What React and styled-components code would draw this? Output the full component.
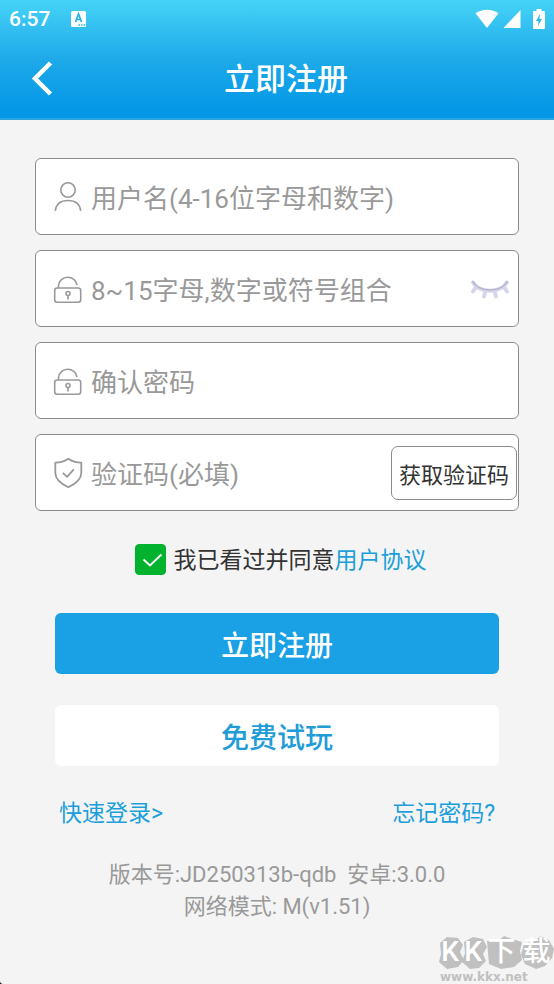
import React, { useState } from "react";
import styled, { createGlobalStyle } from "styled-components";

const GlobalStyle = createGlobalStyle`
  *, *::before, *::after { box-sizing: border-box; }
  body {
    margin: 0;
    background: #f4f4f4;
    color: #333;
    font-family: Roboto, "Noto Sans CJK SC", sans-serif;
  }
  button, input { font: inherit; }
`;

const Page = styled.div`
  position: relative;
  display: flex;
  flex-direction: column;
  min-height: 100vh;
`;

const Header = styled.header`
  color: #fff;
  background: linear-gradient(#46d3f7 0, #1eaae9 50%, #0498e6 92%, #0498e6 100%);
  border-bottom: 2px solid #2ba5e2;
`;

const StatusBar = styled.div`
  display: flex;
  align-items: center;
  justify-content: space-between;
  height: 38px;
  padding: 0 9px;
  font-size: 21px;
  font-weight: 500;
`;

const StatusGroup = styled.div`
  display: flex;
  align-items: center;
  gap: ${({ $gap }) => $gap}px;
  svg { display: block; }
`;

const TitleBar = styled.div`
  display: grid;
  grid-template-columns: 84px 1fr 66px;
  align-items: center;
  height: 80px;
`;

const BackButton = styled.button`
  display: flex;
  align-items: center;
  height: 60px;
  padding: 0 0 0 30px;
  border: 0;
  background: none;
  cursor: pointer;
`;

const Title = styled.h1`
  margin: 0;
  padding-top: 4px;
  text-align: center;
  font-size: 31px;
  font-weight: 500;
  line-height: 40px;
`;

const Form = styled.form`
  display: flex;
  flex-direction: column;
  padding: 38px 35px 0;
`;

const Fields = styled.div`
  display: flex;
  flex-direction: column;
  gap: 15px;
`;

const Field = styled.label`
  display: flex;
  align-items: center;
  height: 77px;
  padding: 0 ${({ $tight }) => ($tight ? 1 : 8)}px 0 16px;
  border: 1px solid #8c8c8c;
  border-radius: 6px;
  background: #fff;
  svg { flex: none; }
`;

const TextInput = styled.input`
  flex: 1;
  min-width: 0;
  height: 48px;
  padding: 4px 0 0;
  margin-left: 7px;
  border: 0;
  outline: 0;
  background: none;
  color: #333;
  font-size: 26px;
  &::placeholder { color: #999; opacity: 1; }
`;

const IconButton = styled.button`
  display: flex;
  padding: 0;
  border: 0;
  background: none;
  cursor: pointer;
`;

const CodeButton = styled.button`
  height: 54px;
  padding: 0 7px;
  border: 1px solid #8c8c8c;
  border-radius: 7px;
  background: #fff;
  color: #333;
  font-size: 22px;
  white-space: nowrap;
  cursor: pointer;
`;

const Agreement = styled.div`
  display: flex;
  align-items: center;
  justify-content: center;
  gap: 8px;
  margin-top: 30px;
  padding-left: 7px;
  font-size: 23px;
  line-height: 32px;
`;

const AgreementText = styled.span`
  padding-top: 4px;
`;

const CheckBoxWrap = styled.span`
  display: grid;
  width: 31px;
  height: 31px;
  > * { grid-area: 1 / 1; }
  svg { pointer-events: none; }
`;

const CheckBox = styled.input`
  appearance: none;
  width: 31px;
  height: 31px;
  margin: 0;
  border: 1px solid #00b22d;
  border-radius: 4px;
  background: #fff;
  &:checked { background: #00b22d; }
`;

const Link = styled.a`
  color: #1c9fdb;
  text-decoration: none;
`;

const Actions = styled.div`
  display: flex;
  flex-direction: column;
  gap: 31px;
  margin-top: 36px;
  padding: 0 20px;
`;

const ActionButton = styled.button`
  height: 61px;
  padding: 0;
  border: 0;
  border-radius: 6px;
  background: ${({ $primary }) => ($primary ? "#1aa0e5" : "#fff")};
  color: ${({ $primary }) => ($primary ? "#fff" : "#219cd8")};
  font-size: 28px;
  font-weight: 500;
  cursor: pointer;
`;

const Links = styled.nav`
  display: flex;
  justify-content: space-between;
  margin-top: 32px;
  padding: 0 24px;
  font-size: 23px;
  line-height: 32px;
`;

const Version = styled.footer`
  margin-top: 29px;
  text-align: center;
  color: #999;
  font-size: 22px;
  line-height: 32px;
  white-space: pre-wrap;
  p { margin: 0; }
`;

const Watermark = styled.aside`
  position: absolute;
  right: 0;
  bottom: 0;
  width: 116px;
  color: #c0c0c0;
`;

const WatermarkLogo = styled.div`
  display: grid;
  > * { grid-area: 1 / 1; }
  svg { display: block; }
`;

const WatermarkName = styled.div`
  display: grid;
  grid-template-columns: 24px 22px 35px 35px;
  justify-items: center;
  align-items: center;
  color: #fff;
  font-size: 28px;
  font-weight: 500;
  line-height: 32px;
  height: 32px;
`;

const WatermarkSite = styled.div`
  height: 14px;
  padding-left: 2px;
  font: bold 12px/14px "DejaVu Sans", sans-serif;
`;

const Corner = styled.svg`
  position: absolute;
  left: 0;
  bottom: 0;
`;

const iconProps = { fill: "none", stroke: "#999", strokeWidth: 1.6, "aria-hidden": true };

const UserIcon = () => (
  <svg width="32" height="32" viewBox="0 0 32 32" {...iconProps}>
    <circle cx="16" cy="9" r="7.200" />
    <path d="M3.300 30C4 23 9 19.500 16 19.500S28 23 28.700 30" />
  </svg>
);

const LockIcon = () => (
  <svg width="32" height="32" viewBox="0 0 32 32" {...iconProps}>
    <rect x="2.700" y="15" width="26" height="14.300" rx="2.500" />
    <path d="M6.500 15v-2.500a9.400 9.400 0 0 1 18.600-.5" />
    <circle cx="16" cy="20.500" r="2" />
    <path d="M16 22.500v4" />
  </svg>
);

const ShieldIcon = () => (
  <svg width="32" height="32" viewBox="0 0 32 32" {...iconProps} strokeWidth="1.800" strokeLinejoin="round">
    <path d="M16.300 1.800c3.700 2.500 8 3.700 13 3.900v10c0 7-5.500 11-13 14.500-7.500-3.500-13-7.500-13-14.500v-10c5-.2 9.300-1.400 13-3.900Z" />
    <path d="m10.800 15.800 4.200 4 6.800-7.500" />
  </svg>
);

const EyeClosedIcon = () => (
  <svg width="40" height="22" viewBox="0 0 40 22" fill="none" aria-hidden="true">
    <g stroke="#d5d5ec" strokeWidth="4" strokeLinecap="round">
      <path d="M3 4.500C10 15.500 30 15.500 37 4.500" />
      <path d="m6 9-3 4.500M15.500 13 14 18.500M24.500 13l1.500 5.500M34 9l3 4.500" />
    </g>
    <path d="M2.500 3C9 15 31 15 37.500 3" stroke="#b3b3cd" strokeWidth="1.500" />
  </svg>
);

const KeyboardIcon = () => (
  <svg width="15" height="16" viewBox="0 0 15 16" aria-hidden="true">
    <rect width="15" height="16" rx="1.500" fill="#fff" />
    <path d="m4.500 11 3-8 3 8M5.500 8.500h4" fill="none" stroke="#25b3e8" strokeWidth="1.700" />
    <path d="M7.500 14h1.500M10 14h1.500M12.500 14H14" stroke="#25b3e8" strokeWidth="1.300" />
  </svg>
);

const WifiIcon = () => (
  <svg width="24" height="20" viewBox="0 0 24 20" fill="#fff" aria-hidden="true">
    <path d="M.5 4.300C7-.5 17-.5 23.500 4.300L12 19Z" />
  </svg>
);

const SignalIcon = () => (
  <svg width="18" height="20" viewBox="0 0 18 20" fill="#fff" aria-hidden="true">
    <path d="M17.500 1v18H.5Z" />
  </svg>
);

const BatteryIcon = () => (
  <svg width="12" height="20" viewBox="0 0 12 20" aria-hidden="true">
    <path d="M3.500 0h5v2H11q1 0 1 1v16q0 1-1 1H1q-1 0-1-1V3q0-1 1-1h2.500Z" fill="#fff" />
    <path d="m7 5-4 7h2.500L5 17l4-7H6.500Z" fill="#30b9ea" />
  </svg>
);

export default function App() {
  const [agreed, setAgreed] = useState(true);
  const [visible, setVisible] = useState(false);

  return (
    <Page>
      <GlobalStyle />
      <Header>
        <StatusBar>
          <StatusGroup $gap={21}>
            <span>6:57</span>
            <KeyboardIcon />
          </StatusGroup>
          <StatusGroup $gap={4}>
            <WifiIcon />
            <StatusGroup $gap={12}>
              <SignalIcon />
              <BatteryIcon />
            </StatusGroup>
          </StatusGroup>
        </StatusBar>
        <TitleBar>
          <BackButton type="button" aria-label="返回">
            <svg width="24" height="36" viewBox="0 0 24 36" fill="none" stroke="#fff" strokeWidth="4.500">
              <path d="M20.500 3 5 18.500 20.500 34" />
            </svg>
          </BackButton>
          <Title>立即注册</Title>
        </TitleBar>
      </Header>

      <Form onSubmit={(e) => e.preventDefault()}>
        <Fields>
          <Field>
            <UserIcon />
            <TextInput aria-label="用户名" placeholder="用户名(4-16位字母和数字)" />
          </Field>
          <Field>
            <LockIcon />
            <TextInput type={visible ? "text" : "password"} aria-label="密码" placeholder="8~15字母,数字或符号组合" />
            <IconButton type="button" aria-label="显示密码" onClick={() => setVisible(!visible)}>
              <EyeClosedIcon />
            </IconButton>
          </Field>
          <Field>
            <LockIcon />
            <TextInput type="password" aria-label="确认密码" placeholder="确认密码" />
          </Field>
          <Field $tight>
            <ShieldIcon />
            <TextInput aria-label="验证码" placeholder="验证码(必填)" />
            <CodeButton type="button">获取验证码</CodeButton>
          </Field>
        </Fields>

        <Agreement>
          <CheckBoxWrap>
            <CheckBox id="agree" type="checkbox" checked={agreed} onChange={(e) => setAgreed(e.target.checked)} />
            <svg width="31" height="31" viewBox="0 0 31 31" fill="none" stroke="#fff" strokeWidth="2" aria-hidden="true">
              <path d="m8.500 15.500 6.500 6 11.500-11" />
            </svg>
          </CheckBoxWrap>
          <AgreementText>
            <label htmlFor="agree">我已看过并同意</label>
            <Link href="#agreement">用户协议</Link>
          </AgreementText>
        </Agreement>

        <Actions>
          <ActionButton type="submit" $primary>立即注册</ActionButton>
          <ActionButton type="button">免费试玩</ActionButton>
        </Actions>

        <Links>
          <Link href="#login">快速登录&gt;</Link>
          <Link href="#forgot">忘记密码?</Link>
        </Links>
      </Form>

      <Version>
        <p>{"版本号:JD250313b-qdb  安卓:3.0.0"}</p>
        <p>网络模式: M(v1.51)</p>
      </Version>

      <Watermark>
        <WatermarkLogo>
          <svg width="116" height="34" viewBox="0 0 116 34" fill="#c0c0c0" aria-hidden="true">
            <path d="m2 7 7-6 11 1 5 7-3 7 4 8-6 7-11 2-8-7 2-8Z" />
            <path d="m26 6 9-5 10 2 4 8-4 7 3 7-7 7-9 1-8-7 3-9Z" />
            <path d="m49 5 12-1 5-4 8 3 10 3-2 9 2 9-8 7-13 2-12-5Z" />
            <path d="m86 8 11-3 5-5 9 4 5 9-2 9-7 8-9 3-11-5-4-9Z" />
          </svg>
          <WatermarkName>
            <span>K</span>
            <span>K</span>
            <span>下</span>
            <span>载</span>
          </WatermarkName>
        </WatermarkLogo>
        <WatermarkSite>www.kkx.net</WatermarkSite>
      </Watermark>
      <Corner width="3" height="3" viewBox="0 0 3 3" aria-hidden="true">
        <path d="M0 0q0 3 3 3H0Z" fill="#000" />
      </Corner>
    </Page>
  );
}
